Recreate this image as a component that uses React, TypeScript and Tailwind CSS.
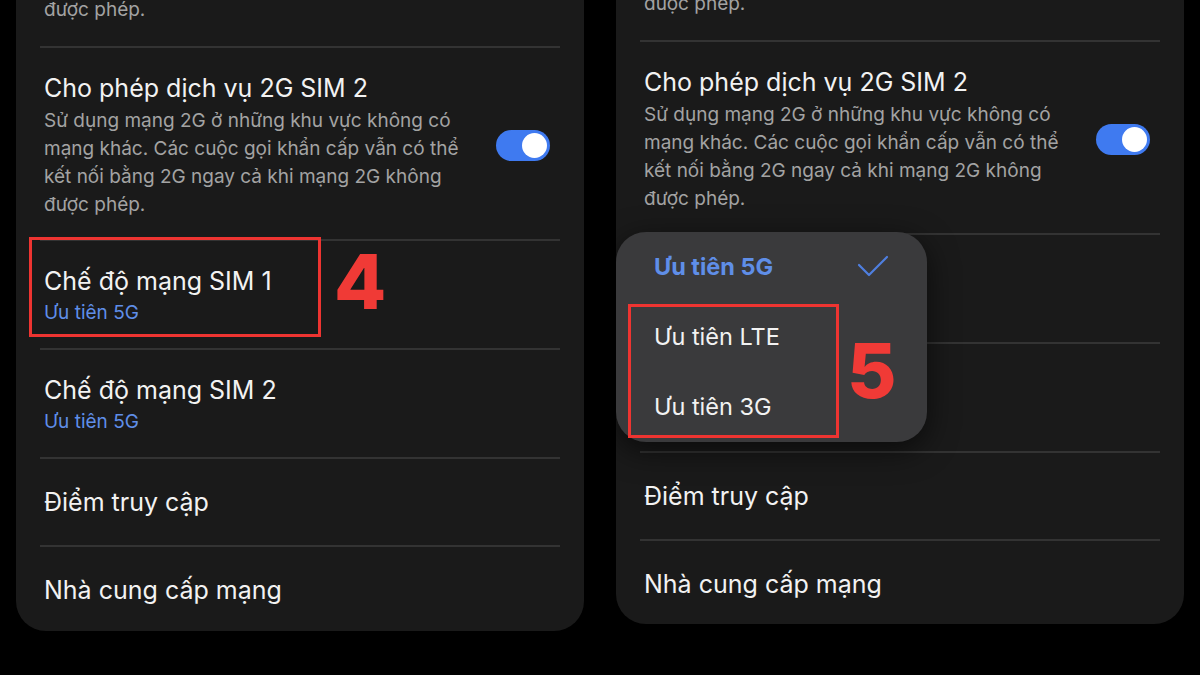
import React from 'react';

const font = { fontFamily: 'Inter, Roboto, "Noto Sans", sans-serif' };

function Divider() {
    return <div className="mx-[24px] h-[2px] bg-[#333333]" />;
}

function Toggle() {
    return (
        <div className="flex h-[31px] w-[54px] shrink-0 items-center justify-end rounded-full bg-[#3f7af0] pr-[3px]">
            <div className="h-[25px] w-[25px] rounded-full bg-white" />
        </div>
    );
}

function Panel({ offset, children }: { offset: 'left' | 'right'; children?: React.ReactNode }) {
    const rowsTop = offset === 'left' ? '-mt-[4px]' : '-mt-[10px]';
    return (
        <div className="relative h-full w-[568px] overflow-hidden rounded-b-[30px] bg-[#1a1a1a]">
            <div className={rowsTop}>
                <div className="px-[28px] pb-[22px] text-[19px] leading-[28px] text-[#a3a3a3]">được phép.</div>
                <Divider />
                <div className="flex items-center justify-between pb-[20px] pl-[28px] pr-[34px] pt-[24px]">
                    <div>
                        <div className="text-[25px] leading-[32px] text-[#f2f2f2]">Cho phép dịch vụ 2G SIM 2</div>
                        <div className="mt-[3px] whitespace-nowrap text-[19px] leading-[28px] text-[#a3a3a3]">
                            Sử dụng mạng 2G ở những khu vực không có
                            <br />
                            mạng khác. Các cuộc gọi khẩn cấp vẫn có thể
                            <br />
                            kết nối bằng 2G ngay cả khi mạng 2G không
                            <br />
                            được phép.
                        </div>
                    </div>
                    <Toggle />
                </div>
                <Divider />
                <div className="px-[28px] pb-[22px] pt-[24px]">
                    <div className="text-[25px] leading-[32px] text-[#f2f2f2]">Chế độ mạng SIM 1</div>
                    <div className="mt-[3px] text-[19px] leading-[26px] text-[#5f8ee8]">Ưu tiên 5G</div>
                </div>
                <Divider />
                <div className="px-[28px] pb-[22px] pt-[24px]">
                    <div className="text-[25px] leading-[32px] text-[#f2f2f2]">Chế độ mạng SIM 2</div>
                    <div className="mt-[3px] text-[19px] leading-[26px] text-[#5f8ee8]">Ưu tiên 5G</div>
                </div>
                <Divider />
                <div className="px-[28px] pb-[27px] pt-[27px] text-[25px] leading-[32px] text-[#f2f2f2]">Điểm truy cập</div>
                <Divider />
                <div className="px-[28px] pb-[26px] pt-[27px] text-[25px] leading-[32px] text-[#f2f2f2]">Nhà cung cấp mạng</div>
            </div>
            {children}
        </div>
    );
}

export default function App() {
    return (
        <div className="flex h-[675px] w-[1200px] gap-[32px] overflow-hidden bg-black px-[16px] pb-[44px]" style={font}>
            <div className="h-[631px]">
                <Panel offset="left">
                    <div className="absolute left-[13px] top-[237px] h-[100px] w-[292px] border-[3px] border-[#ee3431]" />
                    <div className="absolute left-[318px] top-[233px] text-[76px] font-extrabold leading-[96px] text-[#f03a36]">4</div>
                </Panel>
            </div>
            <div className="h-[624px]">
                <Panel offset="right">
                    <div className="absolute left-0 top-[232px] h-[210px] w-[311px] rounded-[30px] bg-[#3a3a3c] shadow-[0_8px_30px_rgba(0,0,0,0.6)]">
                        <div className="flex h-[70px] items-center justify-between pl-[38px] pr-[38px] text-[23.5px] font-bold text-[#5f8ee8]">
                            <span>Ưu tiên 5G</span>
                            <svg width="32" height="24" viewBox="0 0 32 24" fill="none">
                                <path d="M2 10 L12 20 L30 2" stroke="#4f7fe0" strokeWidth="2.2" strokeLinecap="round" strokeLinejoin="round" />
                            </svg>
                        </div>
                        <div className="flex h-[70px] items-center pl-[38px] text-[23.5px] text-[#f2f2f2]">Ưu tiên LTE</div>
                        <div className="flex h-[70px] items-center pl-[38px] text-[23.5px] text-[#f2f2f2]">Ưu tiên 3G</div>
                    </div>
                    <div className="absolute left-[12px] top-[304px] h-[134px] w-[211px] border-[3px] border-[#ee3431]" />
                    <div className="absolute left-[231px] top-[322px] text-[76px] font-extrabold leading-[96px] text-[#f03a36]">5</div>
                </Panel>
            </div>
        </div>
    );
}
